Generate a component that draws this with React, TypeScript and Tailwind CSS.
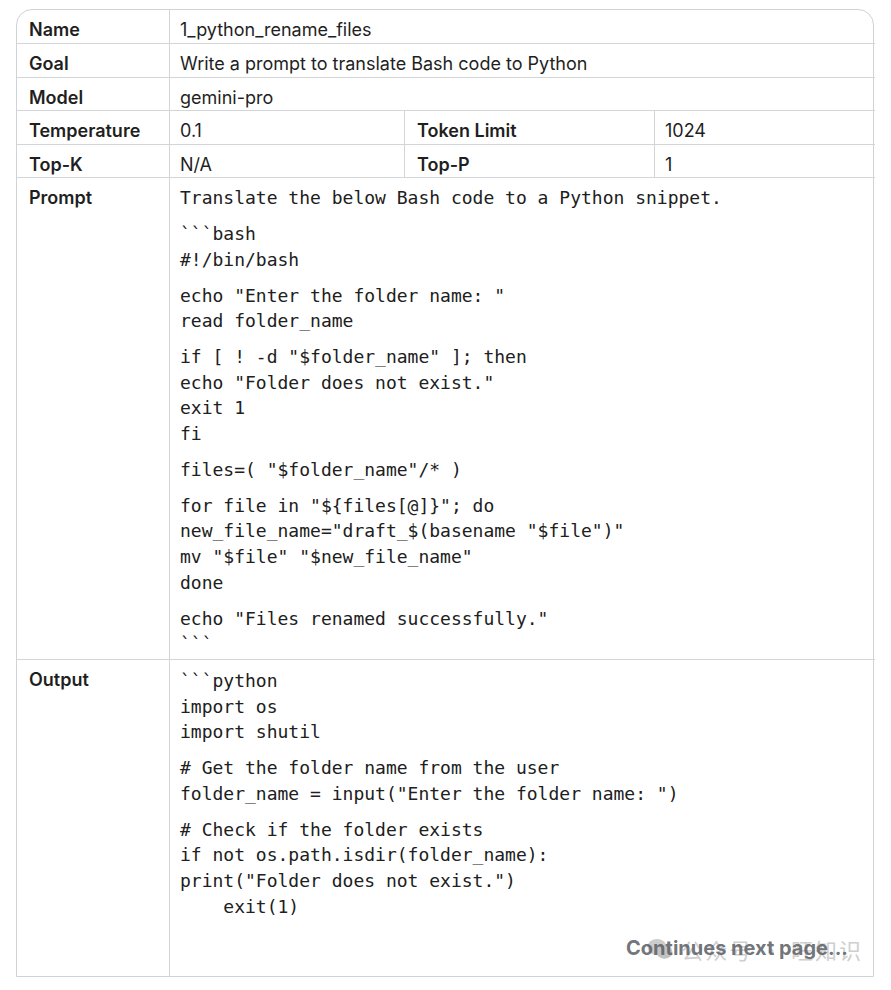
import React from "react";

const sans = "font-['Inter','Roboto','Noto_Sans',sans-serif]";
const mono = "font-['DejaVu_Sans_Mono','Liberation_Mono',monospace]";

const promptBlocks: string[][] = [
  ["Translate the below Bash code to a Python snippet."],
  ["```bash", "#!/bin/bash"],
  ['echo "Enter the folder name: "', "read folder_name"],
  ['if [ ! -d "$folder_name" ]; then', 'echo "Folder does not exist."', "exit 1", "fi"],
  ['files=( "$folder_name"/* )'],
  [
    'for file in "${files[@]}"; do',
    'new_file_name="draft_$(basename "$file")"',
    'mv "$file" "$new_file_name"',
    "done",
  ],
  ['echo "Files renamed successfully."', "```"],
];

const outputBlocks: string[][] = [
  ["```python", "import os", "import shutil"],
  ["# Get the folder name from the user", 'folder_name = input("Enter the folder name: ")'],
  [
    "# Check if the folder exists",
    "if not os.path.isdir(folder_name):",
    'print("Folder does not exist.")',
    "    exit(1)",
  ],
];

const CodeBlocks: React.FC<{ blocks: string[][] }> = ({ blocks }) => (
  <div className={`${mono} text-[18px] leading-[25.6px] text-[#202020] whitespace-pre`}>
    {blocks.map((lines, i) => (
      <div key={i} className={i > 0 ? "mt-[10.4px]" : ""}>
        {lines.map((l, j) => (
          <div key={j}>{l}</div>
        ))}
      </div>
    ))}
  </div>
);

const label = `${sans} pl-[12px] pt-[8px] text-[18px] leading-[24px] font-semibold text-[#1f1f1f]`;
const value = `${sans} pl-[10px] pt-[8px] text-[18px] leading-[24px] text-[#1f1f1f] border-l border-[#d3d5d9]`;
const line = "border-t border-[#d3d5d9]";

export default function App() {
  return (
    <div className="min-h-screen bg-white pt-[9px] pl-[16px]">
      <div className="grid w-[858px] grid-cols-[152px_235px_250px_221px] rounded-t-[16px] border border-[#cfd2d7]">
        {/* short rows */}
        <div className={`${label} h-[33px]`}>Name</div>
        <div className={`${value} col-span-3 h-[33px]`}>1_python_rename_files</div>

        <div className={`${label} ${line} h-[34px]`}>Goal</div>
        <div className={`${value} ${line} col-span-3 h-[34px]`}>
          Write a prompt to translate Bash code to Python
        </div>

        <div className={`${label} ${line} h-[33px]`}>Model</div>
        <div className={`${value} ${line} col-span-3 h-[33px]`}>gemini-pro</div>

        <div className={`${label} ${line} h-[34px]`}>Temperature</div>
        <div className={`${value} ${line} h-[34px]`}>0.1</div>
        <div className={`${label} ${line} h-[34px] border-l border-[#d3d5d9] pl-[10px]`}>Token Limit</div>
        <div className={`${value} ${line} h-[34px]`}>1024</div>

        <div className={`${label} ${line} h-[33px]`}>Top-K</div>
        <div className={`${value} ${line} h-[33px]`}>N/A</div>
        <div className={`${label} ${line} h-[33px] border-l border-[#d3d5d9] pl-[10px]`}>Top-P</div>
        <div className={`${value} ${line} h-[33px]`}>1</div>

        {/* prompt */}
        <div className={`${label} ${line} h-[482px] pt-[6px]`}>Prompt</div>
        <div className={`${line} col-span-3 h-[482px] border-l border-[#d3d5d9] pl-[10px] pt-[7px]`}>
          <CodeBlocks blocks={promptBlocks} />
        </div>

        {/* output */}
        <div className={`${label} ${line} h-[317px] pt-[7px]`}>Output</div>
        <div className={`${line} relative col-span-3 flex h-[317px] flex-col border-l border-[#d3d5d9] pl-[10px] pt-[8px]`}>
          <CodeBlocks blocks={outputBlocks} />
          {/* watermark, sits behind the footer text */}
          <div className="pointer-events-none absolute right-[12px] bottom-[14px] flex items-center gap-[8px] text-[#cfcfcf]">
            <svg width="26" height="22" viewBox="0 0 26 22" fill="#cccccc">
              <ellipse cx="10" cy="9" rx="9.5" ry="8" />
              <ellipse cx="17.5" cy="14" rx="8" ry="6.8" fill="#c2c2c2" />
            </svg>
            <span className="font-['Noto_Sans_CJK_SC',sans-serif] text-[22px] leading-[26px] tracking-[2px]">
              公众号 · 旺知识
            </span>
          </div>
          <div className="relative mt-auto mb-[16px] flex justify-end pr-[27px]">
            <span className={`${sans} text-[20px] leading-[24px] font-bold text-[#5f6368]/90`}>
              Continues next page...
            </span>
          </div>
        </div>
      </div>
    </div>
  );
}
